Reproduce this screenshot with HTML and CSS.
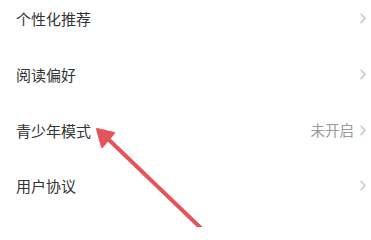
FILE: index.html
```html
<!DOCTYPE html>
<html lang="zh">
<head>
<meta charset="utf-8">
<link rel="stylesheet" href="styles.css">
</head>
<body>
<div class="page">
  <ul class="list">
    <li class="row"><span class="label">个性化推荐</span><span class="right"><svg class="chev" viewBox="0 0 6 11"><path d="M0.7 0.7 L5 5.5 L0.7 10.3" /></svg></span></li>
    <li class="row"><span class="label">阅读偏好</span><span class="right"><svg class="chev" viewBox="0 0 6 11"><path d="M0.7 0.7 L5 5.5 L0.7 10.3" /></svg></span></li>
    <li class="row"><span class="label">青少年模式</span><span class="right"><span class="value">未开启</span><svg class="chev" viewBox="0 0 6 11"><path d="M0.7 0.7 L5 5.5 L0.7 10.3" /></svg></span></li>
    <li class="row"><span class="label">用户协议</span><span class="right"><svg class="chev" viewBox="0 0 6 11"><path d="M0.7 0.7 L5 5.5 L0.7 10.3" /></svg></span></li>
  </ul>
  <svg class="arrow" viewBox="0 0 371 227" width="371" height="227">
    <line x1="106" y1="137" x2="205" y2="232" stroke="#e4545a" stroke-width="4" stroke-linecap="round"/>
    <polygon points="97,129 114,133 102,147" fill="#e4545a" stroke="#e4545a" stroke-width="2" stroke-linejoin="round"/>
  </svg>
</div>
</body>
</html>
```
FILE: styles.css
```css
html, body {
  margin: 0;
  padding: 0;
  background: #ffffff;
}
body {
  font-family: "Noto Sans CJK SC", "Noto Sans", sans-serif;
  width: 371px;
  height: 227px;
  overflow: hidden;
}
.page {
  position: relative;
  width: 371px;
  height: 227px;
  overflow: hidden;
}
.list {
  list-style: none;
  margin: -9px 0 0 0;
  padding: 0;
}
.row {
  height: 55.7px;
  display: flex;
  align-items: center;
  justify-content: space-between;
  padding: 0 5px 0 16px;
}
.label {
  font-size: 15px;
  color: #333333;
  line-height: 1;
}
.right {
  display: flex;
  align-items: center;
  gap: 6px;
}
.value {
  font-size: 14.5px;
  color: #9a9a9a;
  line-height: 1;
}
.chev {
  width: 6px;
  height: 11px;
  fill: none;
  stroke: #c4c4c4;
  stroke-width: 1.3;
}
.arrow {
  position: absolute;
  left: 0;
  top: 0;
}
```
